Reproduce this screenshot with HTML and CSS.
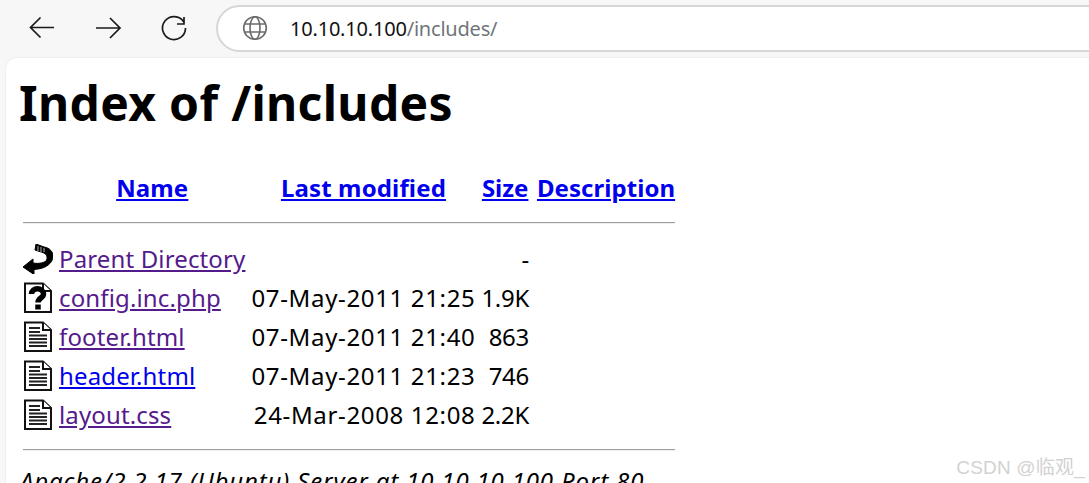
FILE: index.html
```html
<!DOCTYPE html>
<html lang="en">
<head>
  <meta charset="UTF-8" />
  <title>Index of /includes</title>
  <link rel="stylesheet" href="styles.css">
</head>
<body>
  <div class="toolbar">
    <button class="nav-button" aria-label="Back">
      <svg width="28" height="28" viewBox="0 0 28 28"><path d="M26 13.500H3M12.500 3.500l-10 10 10 10"/></svg>
    </button>
    <button class="nav-button" aria-label="Forward">
      <svg width="28" height="28" viewBox="0 0 28 28"><path d="M2 14h23M16 4l10 10-10 10"/></svg>
    </button>
    <button class="nav-button" aria-label="Reload">
      <svg width="28" height="28" viewBox="0 0 28 28"><path d="M23.700 7.900A11.500 11.500 0 1 0 25.500 14M24 3v7h-7"/></svg>
    </button>
    <div class="address-bar">
      <svg class="globe" width="26" height="26" viewBox="0 0 26 26"><circle cx="13" cy="13" r="11.300"/><ellipse cx="13" cy="13" rx="5" ry="11.300"/><path d="M2.600 9h20.800M2.600 17h20.800"/></svg>
      <span class="url">10.10.10.100<span class="url-path">/includes/</span></span>
    </div>
  </div>
  <div class="page">
    <h1>Index of /includes</h1>
    <table class="listing">
      <tr class="head-row">
        <th></th>
        <th><a href="#n">Name</a></th>
        <th><a href="#m">Last modified</a></th>
        <th class="size-head"><a href="#s">Size</a></th>
        <th class="desc"><a href="#d">Description</a></th>
      </tr>
      <tr class="rule-row"><th colspan="5"><hr></th></tr>
      <tr>
        <td class="icon-cell">
          <svg width="30" height="30" viewBox="3 3 30 30"><path class="solid" d="M3 26 13 18v4c6 1 13 0 14-4 .5-3-1-5-3-6l-9-3 1-6 8 3c6 1 9 5 9 9 0 7-7 12-15 13l-4 .5v5z"/><path class="stripes" d="M18 5v5M21 6v6M24 7v4"/></svg>
        </td>
        <td><a class="seen" href="#p">Parent Directory</a></td>
        <td class="date"></td>
        <td class="size">-</td>
        <td></td>
      </tr>
      <tr>
        <td class="icon-cell">
          <svg width="30" height="32" viewBox="0 0 30 32"><path class="page-icon" d="M2 1.500h18L28 9v21H2z"/><path class="page-icon" d="M20 1.500V9h8"/><path class="mark" d="M8.500 12c0-7 12-7 12 0 0 4-5.500 4-5.500 8.500M15 22.500v5"/></svg>
        </td>
        <td><a class="seen" href="#c">config.inc.php</a></td>
        <td class="date">07-May-2011 21:25</td>
        <td class="size">1.9K</td>
        <td></td>
      </tr>
      <tr>
        <td class="icon-cell">
          <svg width="30" height="32" viewBox="0 0 30 32"><path class="page-icon" d="M2 1.500h18L28 9v21H2z"/><path class="page-icon" d="M20 1.500V9h8"/><path class="lines" d="M6 7h11M6 11h11M6 14.500h18M6 18h18M6 21.500h18M6 25h18"/></svg>
        </td>
        <td><a class="seen" href="#f">footer.html</a></td>
        <td class="date">07-May-2011 21:40</td>
        <td class="size">863</td>
        <td></td>
      </tr>
      <tr>
        <td class="icon-cell">
          <svg width="30" height="32" viewBox="0 0 30 32"><path class="page-icon" d="M2 1.500h18L28 9v21H2z"/><path class="page-icon" d="M20 1.500V9h8"/><path class="lines" d="M6 7h11M6 11h11M6 14.500h18M6 18h18M6 21.500h18M6 25h18"/></svg>
        </td>
        <td><a href="#h">header.html</a></td>
        <td class="date">07-May-2011 21:23</td>
        <td class="size">746</td>
        <td></td>
      </tr>
      <tr>
        <td class="icon-cell">
          <svg width="30" height="32" viewBox="0 0 30 32"><path class="page-icon" d="M2 1.500h18L28 9v21H2z"/><path class="page-icon" d="M20 1.500V9h8"/><path class="lines" d="M6 7h11M6 11h11M6 14.500h18M6 18h18M6 21.500h18M6 25h18"/></svg>
        </td>
        <td><a class="seen" href="#l">layout.css</a></td>
        <td class="date">24-Mar-2008 12:08</td>
        <td class="size">2.2K</td>
        <td></td>
      </tr>
      <tr class="rule-row last"><th colspan="5"><hr></th></tr>
    </table>
    <address>Apache/2.2.17 (Ubuntu) Server at 10.10.10.100 Port 80</address>
  </div>
  <div class="watermark">CSDN @临观_</div>
</body>
</html>
```

FILE: styles.css
```css
html, body {
  height: 100%;
}
body {
  margin: 0;
  background-color: #f7f7f7;
  color: #000;
  font-family: "Noto Sans", sans-serif;
  overflow: hidden;
  position: relative;
}
.toolbar {
  height: 58px;
  display: flex;
  align-items: center;
  padding: 0 0 2px 28px;
  box-sizing: border-box;
}
.nav-button {
  background: none;
  border: none;
  padding: 0;
  width: 28px;
  height: 28px;
  margin-right: 38px;
  display: flex;
  cursor: pointer;
}
.nav-button:nth-child(3) {
  margin-right: 28px;
}
.nav-button svg {
  fill: none;
  stroke: #1a1a1a;
  stroke-width: 1.7;
}
.address-bar {
  flex: 1;
  height: 47px;
  margin-right: -40px;
  border: 2px solid #d6d6d6;
  border-radius: 24px;
  background: #fff;
  display: flex;
  align-items: center;
  padding-left: 24px;
  box-sizing: border-box;
}
.globe {
  fill: none;
  stroke: #6b6b6b;
  stroke-width: 1.6;
  margin-right: 22px;
}
.url {
  font-size: 20px;
  letter-spacing: -0.2px;
  color: #111;
}
.url-path {
  color: #70757a;
}
.page {
  margin-left: 6px;
  height: calc(100% - 58px);
  padding: 12px 0 0 13px;
  box-sizing: border-box;
  background-color: #fff;
  border-top-left-radius: 10px;
  box-shadow: 0 0 2px #ddd;
}
h1 {
  margin: 0 0 35px;
  font-size: 48px;
  line-height: 65px;
  font-weight: bold;
  letter-spacing: 0.33px;
}
.listing {
  border-spacing: 6px 0;
  margin-left: -2px;
  font-size: 24px;
  letter-spacing: 0.14px;
  line-height: 39px;
}
.listing th {
  padding: 0;
  font-weight: bold;
  line-height: 35px;
}
.listing td {
  padding: 0;
  white-space: nowrap;
  height: 39px;
}
a {
  color: #0000ee;
}
a.seen {
  color: #551a8b;
}
.size-head {
  letter-spacing: 0;
}
.desc {
  padding-left: 2px !important;
  letter-spacing: 0.05px;
}
.head-row th {
  height: 35px;
}
.rule-row th {
  height: 34px;
  vertical-align: middle;
}
.rule-row.last th {
  height: 30px;
  line-height: 0;
}
hr {
  margin: 1px 0 0;
  border: none;
  border-top: 1px solid #a0a0a0;
  border-bottom: 1px solid #eee;
}
.icon-cell {
  width: 30px;
  vertical-align: middle;
}
.icon-cell svg {
  display: block;
}
.date {
  text-align: right;
  letter-spacing: 0.65px;
}
.size {
  text-align: right;
  letter-spacing: -0.3px;
}
.page-icon {
  fill: #fff;
  stroke: #111;
  stroke-width: 2;
}
.solid {
  fill: #000;
  stroke: #000;
  stroke-width: 1;
}
.stripes {
  fill: none;
  stroke: #bbb;
  stroke-width: 1;
}
.lines {
  fill: none;
  stroke: #222;
  stroke-width: 1.8;
}
.mark {
  fill: none;
  stroke: #000;
  stroke-width: 5.5;
}
address {
  margin: 0 0 0 1px;
  font-size: 24px;
  letter-spacing: 0.85px;
  font-style: italic;
  line-height: 34px;
}
.watermark {
  position: absolute;
  right: 4px;
  bottom: 4px;
  font-family: "Liberation Sans", "Noto Sans CJK SC", sans-serif;
  font-size: 19px;
  letter-spacing: 0.2px;
  color: #d2d2d2;
}
```
